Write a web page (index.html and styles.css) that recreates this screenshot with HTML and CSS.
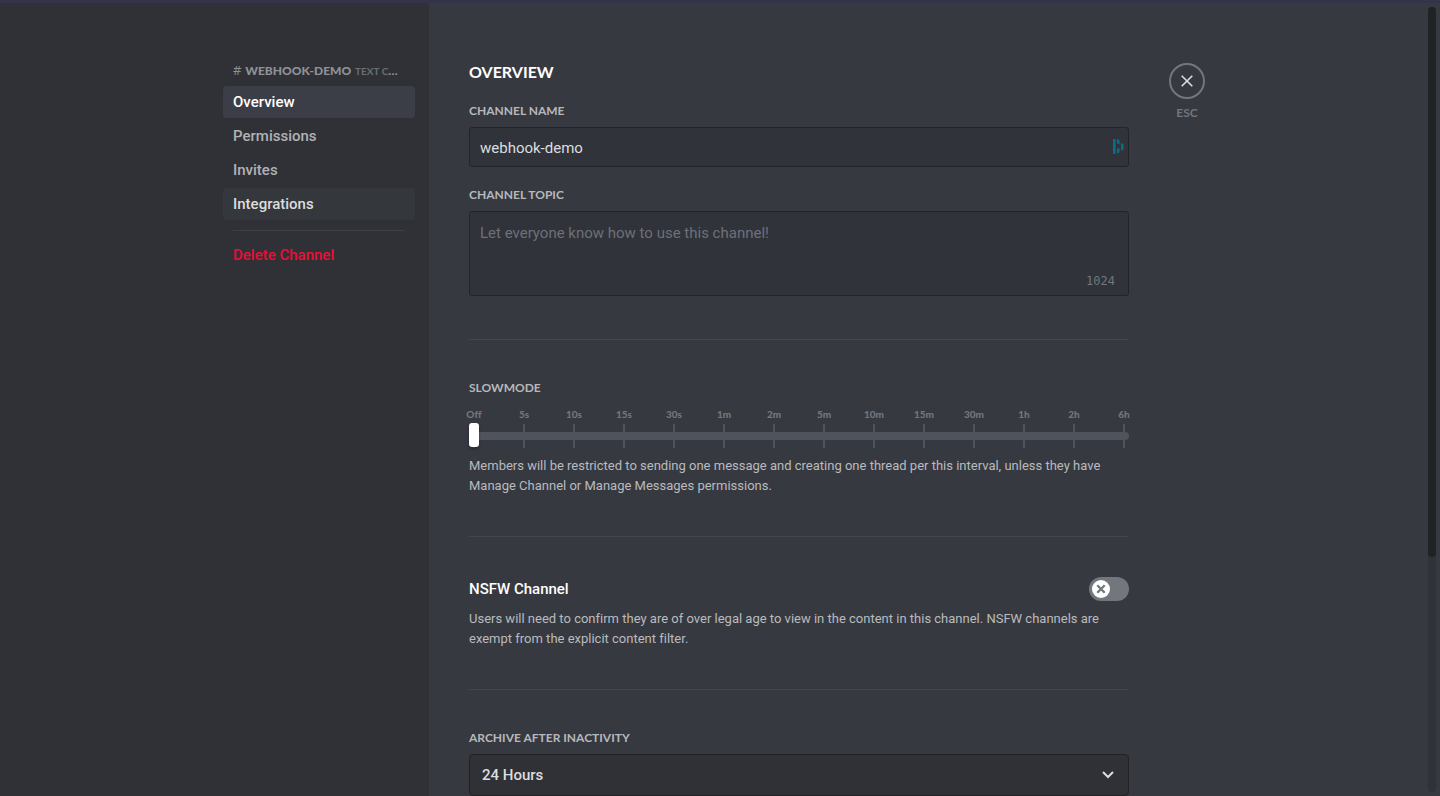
FILE: index.html
```html
<!DOCTYPE html>
<html lang="en">
<head>
<meta charset="utf-8">
<title>Channel settings</title>
<link rel="stylesheet" href="styles.css">
</head>
<body>
<div class="app">
  <aside class="sidebar">
    <nav class="nav">
      <h2 class="nav-header"><span class="hash">#</span> webhook-demo <span class="nav-kind">Text Channels</span></h2>
      <a class="nav-item active" href="#overview" aria-current="page">Overview</a>
      <a class="nav-item" href="#permissions">Permissions</a>
      <a class="nav-item" href="#invites">Invites</a>
      <a class="nav-item hovered" href="#integrations">Integrations</a>
      <hr class="nav-divider">
      <button class="nav-item danger" type="button">Delete Channel</button>
    </nav>
  </aside>
  <div class="main">
    <main class="content">
      <h1 class="title">Overview</h1>
      <div class="field">
        <label class="label" for="name">Channel name</label>
        <div class="box">
          <input class="text-input" id="name" type="text" value="webhook-demo">
          <svg class="fill-icon" width="11" height="15" viewBox="0 0 11 15" aria-hidden="true"><path fill="currentColor" d="M0 0h2.500v15H0zM4 0l2.500 1v4.500L4 4.500zM4 10l2.500-1v4.500L4 14.500zM8 4l2.500 1v5.500L8 11.500z"/></svg>
        </div>
      </div>
      <div class="field">
        <label class="label" for="topic">Channel topic</label>
        <div class="box">
          <textarea class="text-input topic" id="topic" placeholder="Let everyone know how to use this channel!"></textarea>
          <span class="counter">1024</span>
        </div>
      </div>
      <hr class="divider first">
      <section>
        <label class="label" for="slow">Slowmode</label>
        <div class="slider">
          <div class="ticks">
            <span class="tick">Off</span><span class="tick">5s</span><span class="tick">10s</span><span class="tick">15s</span><span class="tick">30s</span><span class="tick">1m</span><span class="tick">2m</span><span class="tick">5m</span><span class="tick">10m</span><span class="tick">15m</span><span class="tick">30m</span><span class="tick">1h</span><span class="tick">2h</span><span class="tick">6h</span>
          </div>
          <input class="range" id="slow" type="range" min="0" max="13" value="0">
        </div>
        <p class="note">Members will be restricted to sending one message and creating one thread per this interval, unless they have Manage Channel or Manage Messages permissions.</p>
      </section>
      <hr class="divider">
      <section>
        <div class="switch-row">
          <label class="switch-title" for="nsfw">NSFW Channel</label>
          <span class="switch">
            <input class="switch-input" id="nsfw" type="checkbox">
            <svg class="switch-icon" width="18" height="18" viewBox="0 0 18 18" aria-hidden="true"><circle cx="9" cy="9" r="9" fill="#fff"/><path d="M5.300 5.300l7.400 7.400M12.700 5.300l-7.400 7.400" stroke="#72767d" stroke-width="2.300" fill="none"/></svg>
          </span>
        </div>
        <p class="note">Users will need to confirm they are of over legal age to view in the content in this channel. NSFW channels are exempt from the explicit content filter.</p>
      </section>
      <hr class="divider">
      <section>
        <label class="label" for="archive">Archive after inactivity</label>
        <div class="box">
          <select class="select" id="archive"><option>24 Hours</option></select>
          <svg class="chevron" width="12" height="8" viewBox="0 0 12 8" aria-hidden="true"><path d="M1 1l5 5 5-5" fill="none" stroke="currentColor" stroke-width="2"/></svg>
        </div>
      </section>
    </main>
    <div class="close">
      <button class="close-button" type="button" aria-label="Close">
        <svg width="12" height="12" viewBox="0 0 12 12" aria-hidden="true"><path d="M.7.7l10.600 10.600M11.300.7L.7 11.300" fill="none" stroke="currentColor" stroke-width="1.600"/></svg>
      </button>
      <span class="close-key">ESC</span>
    </div>
  </div>
  <div class="scrollbar" aria-hidden="true"><div class="scroll-thumb"></div></div>
</div>
</body>
</html>
```
FILE: styles.css
```css
* { box-sizing: border-box; }
body {
  margin: 0;
  font-family: Roboto, "Open Sans", sans-serif;
  font-size: 15px;
  line-height: 20px;
  font-variant-ligatures: none;
  color: #dcddde;
  background: #373940;
}
h1, h2, p, hr { margin: 0; border: 0; }
button, input, textarea, select { font: inherit; color: inherit; margin: 0; }
.app {
  position: relative;
  display: flex;
  height: 100vh;
  overflow: hidden;
  border-top: 3px solid #33344a;
}
.sidebar {
  flex: 1 0 218px;
  display: flex;
  justify-content: flex-end;
  padding: 60px 14px 60px 12px;
  background: #303136;
}
.nav { width: 192px; display: flex; flex-direction: column; gap: 2px; }
.nav-header, .title, .label, .tick, .close-key { font-family: Lato, "Open Sans", sans-serif; }
.nav-header {
  padding: 0 10px 5px;
  font-size: 12px;
  line-height: 16px;
  font-weight: 900;
  text-transform: uppercase;
  white-space: nowrap;
  overflow: hidden;
  text-overflow: ellipsis;
  color: #8e9297;
}
.hash { font-family: "Open Sans", sans-serif; font-size: 13px; line-height: 1; font-weight: 400; margin-right: 1px; }
.nav-kind { font-size: 10px; font-weight: 700; color: #6b6e75; margin-left: 1px; }
.nav-item {
  display: block;
  padding: 6px 10px;
  border: 0;
  border-radius: 4px;
  background: none;
  color: #b0b2b6;
  font-weight: 500;
  text-align: left;
  text-decoration: none;
}
.nav-item.active { background: #3b3e46; color: #fff; }
.nav-item.hovered { background: #34373c; color: #dcddde; }
.nav-item.danger { color: #ed0c37; }
.nav-divider { height: 1px; margin: 8px 10px 6px; background: #3d3f45; }
.main { flex: 1 1 800px; display: flex; align-items: flex-start; }
.content { flex: 0 1 740px; min-width: 460px; padding: 60px 40px 80px; }
.title { font-size: 16px; line-height: 18px; font-weight: 700; text-transform: uppercase; color: #fff; margin-bottom: 22px; }
.field { margin-bottom: 20px; }
.label {
  display: block;
  margin-bottom: 8px;
  font-size: 12px;
  line-height: 16px;
  font-weight: 700;
  text-transform: uppercase;
  color: #b6b8bb;
}
.box { position: relative; }
.text-input {
  display: block;
  width: 100%;
  height: 40px;
  padding: 11px 10px 9px;
  border: 1px solid #222428;
  border-radius: 3px;
  background: #30333a;
  outline: 0;
}
.topic { height: 85px; resize: none; overflow: hidden; }
.topic::placeholder { color: #6d7079; opacity: 1; }
.fill-icon { position: absolute; right: 5px; top: 12px; color: #067086; }
.counter {
  position: absolute;
  right: 14px;
  bottom: 7px;
  font: 12px/16px "DejaVu Sans Mono", monospace;
  color: #72767d;
}
.divider { height: 1px; margin: 40px 0; background: #424549; }
.divider.first { margin-top: 43px; }
.slider { display: grid; margin-bottom: 8px; }
.ticks, .range { grid-area: 1 / 1; }
.ticks { display: flex; justify-content: space-between; }
.tick {
  width: 10px;
  display: flex;
  flex-direction: column;
  align-items: center;
  gap: 3px;
  margin-top: 3px;
  font-size: 10px;
  line-height: 14px;
  font-weight: 900;
  color: #72767d;
}
.tick::after { content: ""; width: 2px; height: 24px; background: #4f535c; }
.range {
  appearance: none;
  align-self: end;
  width: 100%;
  height: 24px;
  background: none;
}
.range::-webkit-slider-runnable-track { height: 8px; border-radius: 4px; background: #4f535c; }
.range::-webkit-slider-thumb {
  appearance: none;
  width: 10px;
  height: 24px;
  margin-top: -9px;
  border-radius: 3px;
  background: #fff;
  box-shadow: 0 2px 3px rgba(0, 0, 0, .3);
}
.note { font-size: 13px; color: #b9bbbe; }
.switch-row { display: flex; justify-content: space-between; margin-bottom: 8px; }
.switch-title { line-height: 24px; font-weight: 500; color: #fff; }
.switch { position: relative; height: 24px; }
.switch-input {
  appearance: none;
  display: block;
  width: 40px;
  height: 24px;
  border-radius: 12px;
  background: #72767d;
}
.switch-icon { position: absolute; left: 3px; top: 3px; pointer-events: none; }
.select {
  appearance: none;
  display: block;
  width: 100%;
  height: 42px;
  padding: 0 12px;
  border: 1px solid #202225;
  border-radius: 4px;
  background: #303136;
  font-weight: 500;
}
.chevron { position: absolute; right: 15px; top: 17px; pointer-events: none; }
.close { display: flex; flex-direction: column; align-items: center; padding-top: 60px; }
.close-button {
  display: flex;
  align-items: center;
  justify-content: center;
  width: 36px;
  height: 36px;
  padding: 0;
  border: 2px solid #72767d;
  border-radius: 50%;
  background: none;
}
.close-key { margin-top: 4px; font-size: 12px; font-weight: 700; color: #72767d; }
.scrollbar {
  position: absolute;
  top: 4px;
  right: 4px;
  bottom: 4px;
  width: 8px;
  border-radius: 4px;
  background: #2f3339;
}
.scroll-thumb { height: 70%; border-radius: 4px; background: #202225; }
```
